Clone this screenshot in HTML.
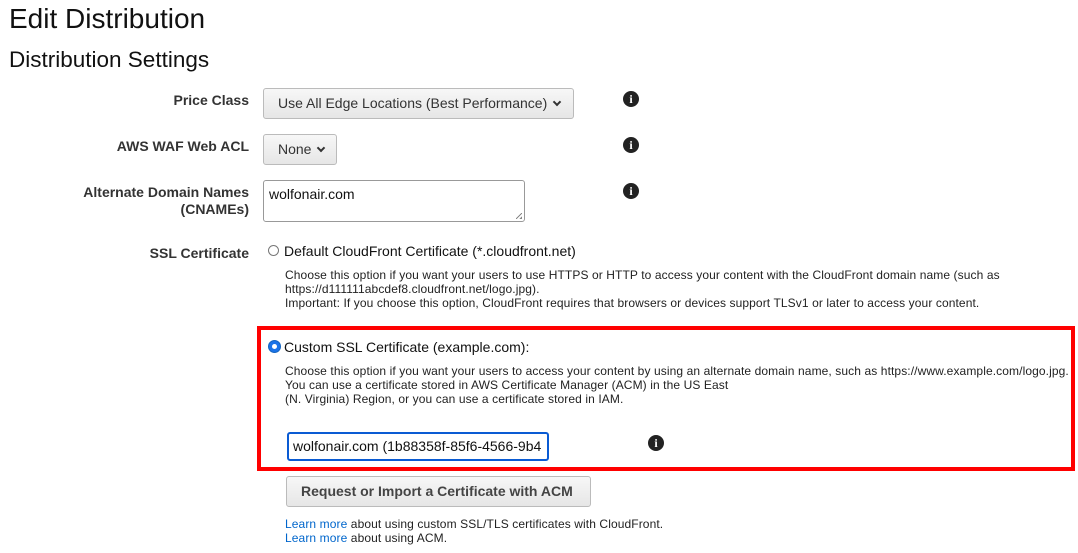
<!DOCTYPE html><html><head><style>
body{margin:0;width:1078px;height:553px;background:#fff;font-family:"Liberation Sans",Arial,sans-serif;color:#111;position:relative;overflow:hidden}
.a{position:absolute;white-space:nowrap}
.lbl{font-weight:bold;font-size:14px;color:#333;text-align:right;right:829px}
.sel{border:1px solid #bbb;border-radius:3px;background:linear-gradient(#f7f7f7,#e6e6e6);font-size:14px;color:#333;box-sizing:border-box;padding-left:14px;line-height:28px}
.info{width:16px;height:16px;border-radius:50%;background:#222;color:#fff;font:bold 12px "Liberation Serif",serif;text-align:center;line-height:16px}
.d{font-size:12px;color:#222;line-height:14px;letter-spacing:0.1px}
.rad{width:11px;height:11px;border:1px solid #777;border-radius:50%;box-sizing:border-box;background:#fff}
a{color:#0066cc;text-decoration:none}
.chev{display:inline-block;width:4px;height:4px;border-right:2px solid #333;border-bottom:2px solid #333;transform:rotate(45deg);margin-left:7px;position:relative;top:-3px}
</style></head><body>
<div class="a" style="left:9px;top:3px;font-size:28px">Edit Distribution</div>
<div class="a" style="left:9px;top:47px;font-size:22.5px">Distribution Settings</div>

<div class="a lbl" style="top:92px">Price Class</div>
<div class="a sel" style="left:263px;top:88px;width:311px;height:31px">Use All Edge Locations (Best Performance)<span class="chev"></span></div>
<div class="a info" style="left:623px;top:91px">i</div>

<div class="a lbl" style="top:138px">AWS WAF Web ACL</div>
<div class="a sel" style="left:263px;top:134px;width:74px;height:31px">None<span class="chev"></span></div>
<div class="a info" style="left:623px;top:137px">i</div>

<div class="a lbl" style="top:184px;line-height:17px">Alternate Domain Names<br>(CNAMEs)</div>
<div class="a" style="left:263px;top:180px;width:262px;height:42px;border:1px solid #999;border-radius:3px;box-sizing:border-box;font-size:14px;padding:5px 5px">wolfonair.com</div>
<div class="a" style="left:516px;top:213px;width:6px;height:6px;background:linear-gradient(135deg,transparent 45%,#888 45%,#888 55%,transparent 55%,transparent 75%,#888 75%)"></div>
<div class="a info" style="left:623px;top:183px">i</div>

<div class="a lbl" style="top:245px">SSL Certificate</div>
<div class="a rad" style="left:268px;top:245px"></div>
<div class="a" style="left:284px;top:243px;font-size:14px">Default CloudFront Certificate (*.cloudfront.net)</div>
<div class="a d" style="left:285px;top:268px">Choose this option if you want your users to use HTTPS or HTTP to access your content with the CloudFront domain name (such as<br>https://d111111abcdef8.cloudfront.net/logo.jpg).<br>Important: If you choose this option, CloudFront requires that browsers or devices support TLSv1 or later to access your content.</div>

<div class="a" style="left:257px;top:326px;width:818px;height:145px;border:4px solid #f00;box-sizing:border-box"></div>
<div class="a" style="left:268px;top:340px;width:13px;height:13px;border-radius:50%;background:#1a73e8;box-sizing:border-box;border:1px solid #1565c0"><div style="width:5px;height:5px;background:#fff;border-radius:50%;margin:3px"></div></div>
<div class="a" style="left:284px;top:339px;font-size:14px">Custom SSL Certificate (example.com):</div>
<div class="a d" style="left:285px;top:364px">Choose this option if you want your users to access your content by using an alternate domain name, such as https://www.example.com/logo.jpg.<br>You can use a certificate stored in AWS Certificate Manager (ACM) in the US East<br>(N. Virginia) Region, or you can use a certificate stored in IAM.</div>
<div class="a" style="left:287px;top:432px;width:262px;height:29px;border:2px solid #0a5bd3;border-radius:3px;box-sizing:border-box;font-size:14px;padding-left:4px;line-height:25px;overflow:hidden">wolfonair.com (1b88358f-85f6-4566-9b4</div>
<div class="a info" style="left:648px;top:435px">i</div>

<div class="a sel" style="left:286px;top:476px;width:305px;height:31px;font-weight:bold;color:#444;padding-left:14px">Request or Import a Certificate with ACM</div>
<div class="a d" style="left:285px;top:517px"><a>Learn more</a> about using custom SSL/TLS certificates with CloudFront.<br><a>Learn more</a> about using ACM.</div>
</body></html>
